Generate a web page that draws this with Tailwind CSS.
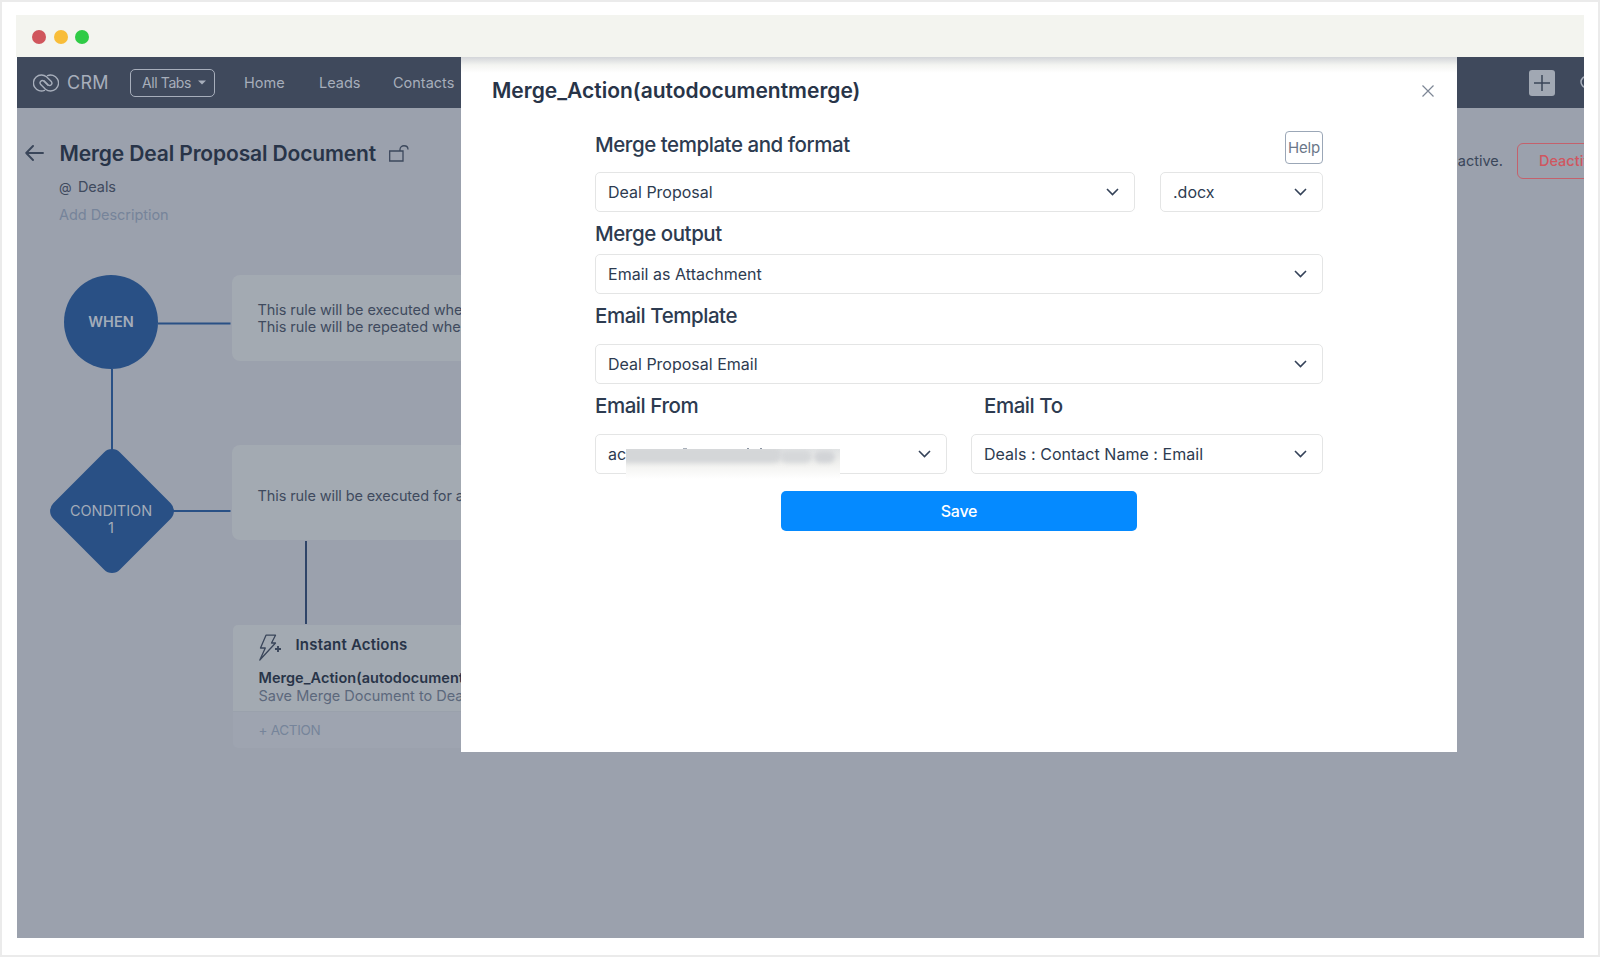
<!DOCTYPE html>
<html lang="en">
<head>
    <meta charset="UTF-8">
    <title>Merge Deal Proposal Document</title>
    <script src="https://cdn.jsdelivr.net/npm/@tailwindcss/browser@4"></script>
</head>
<body class="bg-white font-['Inter','Liberation_Sans',sans-serif] text-[#2d3b50]">
    <div class="relative w-[1600px] h-[957px] border-2 border-[#ebebeb] overflow-hidden pt-[13px] pl-[14px] pr-[14px]">

        <!-- Browser bar -->
        <div class="h-[42px] bg-[#f3f4ef] flex items-center gap-[7.500px] pl-[16px] pt-[2px]">
            <span class="w-[14px] h-[14px] rounded-full bg-[#d0565d]"></span>
            <span class="w-[14px] h-[14px] rounded-full bg-[#f8bd39]"></span>
            <span class="w-[14px] h-[14px] rounded-full bg-[#2fcb46]"></span>
        </div>

        <div class="relative ml-px h-[881px] bg-[#9ba1ad] overflow-hidden">
            <!-- Navigation -->
            <nav class="h-[51px] bg-[#3f495c] flex items-center text-[15px] text-[#a7aebb] whitespace-nowrap">
                <svg class="ml-[16px] w-[26px] h-[18px] shrink-0" viewBox="0 0 26 18" fill="none" stroke="currentColor" stroke-width="1.400" stroke-linecap="round">
                    <path d="M11.500 16.400A8 8 0 1 1 13.500 2.800L18.500 7.800a2.300 2.300 0 0 1-3.200 3.200L11 6.800"/>
                    <path d="M14.500 1.600A8 8 0 1 1 12.500 15.200L7.500 10.200a2.300 2.300 0 0 1 3.200-3.200L15 11.200"/>
                </svg>
                <span class="ml-[8px] w-[63px] text-[18px] tracking-[0.3px]">CRM</span>
                <div class="w-[85px] h-[28px] border border-[#a7aebb] rounded-[5px] flex items-center pl-[11px] text-[14px] tracking-[-0.4px]">
                    <span class="w-[56px]">All Tabs</span>
                    <svg class="w-[8px] h-[5px]" viewBox="0 0 8 5" fill="currentColor"><path d="M0 .5h8L4 4.500z"/></svg>
                </div>
                <span class="ml-[29px] w-[75px] text-[14.500px]">Home</span>
                <span class="w-[74px] text-[14.500px]">Leads</span>
                <span class="text-[14.500px]">Contacts</span>
                <div class="ml-auto mr-[24px] w-[26px] h-[26px] rounded-[3px] bg-[#a1a8b3] flex items-center justify-center shrink-0">
                    <svg class="w-[18px] h-[18px]" viewBox="0 0 18 18" stroke="#3a4558" stroke-width="1.500"><path d="M9 1v16M1 9h16"/></svg>
                </div>
                <svg class="w-[5px] h-[16px] shrink-0" viewBox="0 0 5 16" fill="none" stroke="currentColor" stroke-width="1.500"><circle cx="7.500" cy="7" r="5.500"/></svg>
            </nav>

            <!-- Page header -->
            <div class="flex pl-[8px] pt-[30px] whitespace-nowrap">
                <svg class="mt-[7px] w-[19px] h-[16px] shrink-0" viewBox="0 0 19 16" fill="none" stroke="#3a465a" stroke-width="1.900" stroke-linecap="round" stroke-linejoin="round"><path d="M18 8H1.200M8 1L1.200 8 8 15"/></svg>
                <div class="ml-[15px]">
                    <div class="flex h-[32px] items-center">
                        <h1 class="w-[330px] pl-[0.500px] text-[21px] font-semibold tracking-[-0.13px] text-[#283448]">Merge Deal Proposal Document</h1>
                        <svg class="-mt-[2px] w-[20px] h-[17px]" viewBox="0 0 20 17" fill="none" stroke="#3c485c" stroke-width="1.300"><path d="M.7 6h13.300v10H.7zM11 6V4.500c0-5 8-5 8 0"/></svg>
                    </div>
                    <div class="mt-[6px] text-[14.500px] leading-[22px] tracking-[-0.1px] text-[#3f4a5e]"><span class="inline-block w-[19px] text-[13px]">@</span>Deals</div>
                    <div class="mt-[6px] text-[14.500px] leading-[22px] tracking-[-0.05px] text-[#76849a]">Add Description</div>
                </div>
                <span class="absolute top-[93px] right-[81px] text-[14.500px] text-[#3a465a]">This rule is active.</span>
                <div class="absolute top-[86px] left-[1500px] w-[120px] h-[36px] border-[1.500px] border-[#c4616c] rounded-[6px] pl-[21px] leading-[33px] text-[14.500px] font-medium text-[#d0565f]">Deactivate</div>
            </div>

            <!-- Workflow diagram -->
            <svg class="absolute left-0 top-0 w-[460px] h-[700px]" viewBox="17 57 460 700" fill="none" stroke="#295085" stroke-width="2">
                <path d="M158 323.500h72.500M112 369v82M172 511h58.500"/>
                <path d="M306 541v83" stroke="#2f4468"/>
                <rect x="65" y="464" width="94" height="94" rx="11" transform="rotate(45 112 511)" fill="#295085" stroke="none"/>
            </svg>
            <div class="absolute left-[47px] top-[218px] w-[94px] h-[94px] rounded-full bg-[#295085] flex items-center justify-center text-[14.500px] font-semibold text-[#a3acb9]">WHEN</div>
            <div class="absolute left-[33px] top-[445px] w-[122px] text-center text-[14.500px] leading-[17px] text-[#a3acb9]">CONDITION<br>1</div>

            <div class="absolute left-[215px] top-[218px] w-[600px] h-[86px] rounded-[8px] bg-[#a3aab2] pl-[25.500px] pt-[26px] text-[14.500px] leading-[17px] tracking-[-0.07px] text-[#3f4a5e]">
                This rule will be executed whenever a deal is edited.<br>This rule will be repeated whenever a deal is edited.
            </div>
            <div class="absolute left-[215px] top-[388px] w-[600px] h-[95px] rounded-[8px] bg-[#a3aab2] pl-[25.500px] flex items-center pt-[5px] text-[14.500px] leading-[17px] tracking-[-0.1px] text-[#3f4a5e]">This rule will be executed for all deals.</div>

            <div class="absolute left-[216px] top-[568px] w-[600px] h-[123px] rounded-[5px] bg-[#9ea4b0] overflow-hidden whitespace-nowrap">
                <div class="h-[87px] bg-[#a3aab2] border-b border-[#9aa1ac] pl-[25.500px] pt-[9px]">
                    <div class="flex h-[27px]">
                        <svg class="w-[23px] h-[27px]" viewBox="0 0 23 27" fill="none" stroke="#3a465a" stroke-width="1.300" stroke-linejoin="round"><path d="M7 1.200h9.500L12.500 9h4L.8 26l5.500-12H1.500z"/><path d="M19 12v6M16 15h6" stroke-width="1.900"/></svg>
                        <span class="ml-[14px] text-[15px] leading-[22px] tracking-[0.2px] font-semibold text-[#283448]">Instant Actions</span>
                    </div>
                    <div class="mt-[7px] text-[14.500px] leading-[19px] tracking-[0.04px] font-semibold text-[#283448]">Merge_Action(autodocumentmerge)</div>
                    <div class="text-[14.500px] leading-[18px] text-[#5c687c]">Save Merge Document to Deals</div>
                </div>
                <div class="pl-[25.500px] leading-[37px] text-[13.500px] tracking-[-0.3px] text-[#76849a]">+ ACTION</div>
            </div>

            <!-- Merge action dialog -->
            <div class="absolute left-[444px] top-0 w-[996px] h-[695px] bg-white whitespace-nowrap">
                <div class="h-[16px] bg-linear-to-b from-[#d3d5d9] via-[#f3f4f1] to-white"></div>
                <div class="flex items-center justify-between h-[36px] pl-[31px] pr-[23px]">
                    <h2 class="text-[21px] font-semibold text-[#283448]">Merge_Action(autodocumentmerge)</h2>
                    <svg class="w-[12px] h-[12px]" viewBox="0 0 12 12" stroke="#7d8695" stroke-width="1.200"><path d="M.5.5l11 11M11.500.5l-11 11"/></svg>
                </div>

                <form class="ml-[134px] mt-[22px] w-[728px] text-[16px]">
                    <div class="flex justify-between h-[41px] items-start">
                        <label class="text-[20.500px] leading-[28px] font-medium tracking-[-0.45px]">Merge template and format</label>
                        <button type="button" class="w-[38px] h-[33px] border-[1.500px] border-[#9ba7b7] rounded-[4px] pt-px text-[15px] tracking-[-0.2px] text-[#6b7789]">Help</button>
                    </div>
                    <div class="flex justify-between">
                        <div class="w-[540px] h-[40px] border border-[#e4e5e5] rounded-[5px] flex items-center justify-between pl-[12px] pr-[15px]">
                            <span>Deal Proposal</span>
                            <svg class="w-[13px] h-[8px]" viewBox="0 0 13 8" fill="none" stroke="#344258" stroke-width="1.600"><path d="M1 1l5.500 5.500L12 1"/></svg>
                        </div>
                        <div class="w-[163px] h-[40px] border border-[#e4e5e5] rounded-[5px] flex items-center justify-between pl-[12px] pr-[15px]">
                            <span>.docx</span>
                            <svg class="w-[13px] h-[8px]" viewBox="0 0 13 8" fill="none" stroke="#344258" stroke-width="1.600"><path d="M1 1l5.500 5.500L12 1"/></svg>
                        </div>
                    </div>

                    <label class="block h-[42px] leading-[44px] text-[20.500px] font-medium tracking-[-0.45px]">Merge output</label>
                    <div class="h-[40px] border border-[#e4e5e5] rounded-[5px] flex items-center justify-between pl-[12px] pr-[15px]">
                        <span class="tracking-[0.03px]">Email as Attachment</span>
                        <svg class="w-[13px] h-[8px]" viewBox="0 0 13 8" fill="none" stroke="#344258" stroke-width="1.600"><path d="M1 1l5.500 5.500L12 1"/></svg>
                    </div>

                    <label class="block h-[50px] leading-[44px] text-[20.500px] font-medium tracking-[-0.45px]">Email Template</label>
                    <div class="h-[40px] border border-[#e4e5e5] rounded-[5px] flex items-center justify-between pl-[12px] pr-[15px]">
                        <span>Deal Proposal Email</span>
                        <svg class="w-[13px] h-[8px]" viewBox="0 0 13 8" fill="none" stroke="#344258" stroke-width="1.600"><path d="M1 1l5.500 5.500L12 1"/></svg>
                    </div>

                    <div class="flex h-[50px] leading-[44px] text-[20.500px] font-medium tracking-[-0.45px]">
                        <label class="w-[389px]">Email From</label>
                        <label>Email To</label>
                    </div>
                    <div class="flex justify-between">
                        <div class="relative w-[352px] h-[40px] border border-[#e4e5e5] rounded-[5px] flex items-center justify-between pl-[12px] pr-[15px]">
                            <span>ac</span>
                            <svg class="w-[13px] h-[8px]" viewBox="0 0 13 8" fill="none" stroke="#344258" stroke-width="1.600"><path d="M1 1l5.500 5.500L12 1"/></svg>
                            <!-- Redacted address -->
                            <div class="absolute left-[30px] top-[14px] w-[214px] h-[30px] overflow-hidden bg-linear-to-b from-[#e1e3e4] via-[#f1f1ef] to-white">
                                <div class="absolute -left-[8px] -top-[2px] w-[164px] h-[16px] rounded-full bg-[#d4d6d8] blur-[2px]"></div>
                                <div class="absolute left-[154px] top-[1px] w-[32px] h-[13px] rounded-full bg-[#d6d8da] blur-[2px]"></div>
                                <div class="absolute left-[188px] top-[2px] w-[21px] h-[12px] rounded-full bg-[#d2d4d7] blur-[2px]"></div>
                            </div>
                            <div class="absolute left-[87px] top-[13px] w-[4px] h-px bg-[#a9b0ba]"></div>
                            <div class="absolute left-[151px] top-[13px] w-[2px] h-px bg-[#8c95a3]"></div>
                            <div class="absolute left-[164px] top-[13px] w-[2px] h-px bg-[#8c95a3]"></div>
                        </div>
                        <div class="w-[352px] h-[40px] border border-[#e4e5e5] rounded-[5px] flex items-center justify-between pl-[12px] pr-[15px]">
                            <span class="tracking-[0.03px]">Deals : Contact Name : Email</span>
                            <svg class="w-[13px] h-[8px]" viewBox="0 0 13 8" fill="none" stroke="#344258" stroke-width="1.600"><path d="M1 1l5.500 5.500L12 1"/></svg>
                        </div>
                    </div>
                    <button type="button" class="block mx-auto mt-[17px] w-[356px] h-[40px] rounded-[5px] bg-[#058aff] text-white font-medium tracking-[-0.2px]">Save</button>
                </form>
            </div>
        </div>
    </div>
</body>
</html>
